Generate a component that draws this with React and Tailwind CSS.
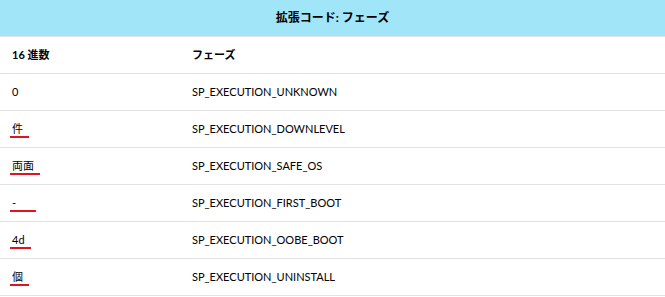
const ROWS = [
  { hex: "0", phase: "SP_EXECUTION_UNKNOWN", mark: false },
  { hex: "件", phase: "SP_EXECUTION_DOWNLEVEL", mark: true },
  { hex: "両面", phase: "SP_EXECUTION_SAFE_OS", mark: true },
  { hex: "-", phase: "SP_EXECUTION_FIRST_BOOT", mark: true, wide: true },
  { hex: "4d", phase: "SP_EXECUTION_OOBE_BOOT", mark: true },
  { hex: "個", phase: "SP_EXECUTION_UNINSTALL", mark: true },
];

function Cell({ children, className = "" }) {
  return <div className={`flex h-9 items-center px-3 ${className}`}>{children}</div>;
}

export default function App() {
  return (
    <div
      className="w-[665px] bg-white text-[11px] text-black"
      style={{ fontFamily: 'Lato, "Noto Sans CJK JP", sans-serif' }}
    >
      <div className="flex h-[37px] items-center justify-center border-b border-[#e2e2e2] bg-[#a1e5f9] text-[12px] font-bold">
        拡張コード: フェーズ
      </div>
      <div className="grid grid-cols-[180px_1fr] border-b border-[#e2e2e2] font-bold">
        <Cell>16 進数</Cell>
        <Cell>フェーズ</Cell>
      </div>
      {ROWS.map((row) => (
        <div key={row.phase} className="grid grid-cols-[180px_1fr] border-b border-[#e2e2e2]">
          <Cell>
            {row.mark ? (
              <span
                className={`-ml-0.5 inline-block border-b-2 border-[#e0141e] pl-0.5 pr-1.5 leading-[15px] ${
                  row.wide ? "w-[26px]" : ""
                }`}
              >
                {row.hex}
              </span>
            ) : (
              row.hex
            )}
          </Cell>
          <Cell>{row.phase}</Cell>
        </div>
      ))}
    </div>
  );
}
